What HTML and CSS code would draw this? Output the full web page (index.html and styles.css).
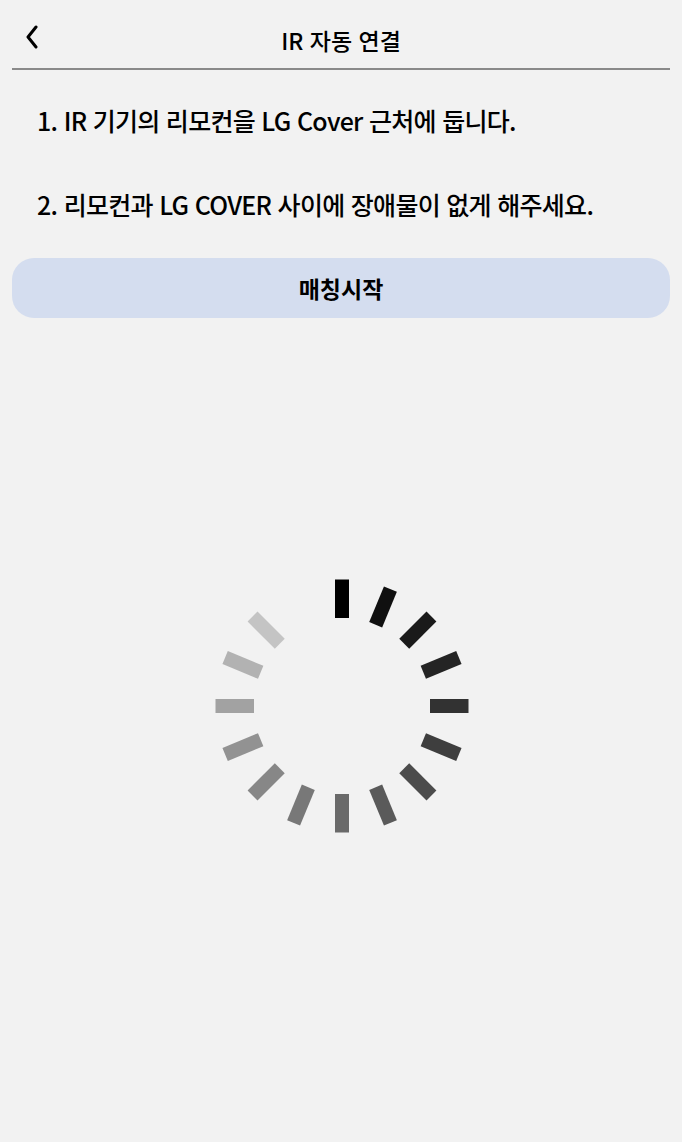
FILE: index.html
```html
<!DOCTYPE html>
<html lang="ko">
<head>
<meta charset="utf-8">
<link rel="stylesheet" href="styles.css">
</head>
<body>
<div class="screen">
  <header class="topbar">
    <svg class="back" width="14" height="24" viewBox="0 0 14 24"><path d="M11 2 L3 12 L11 22" fill="none" stroke="#000" stroke-width="3" stroke-linecap="round" stroke-linejoin="round"/></svg>
    <h1 class="title">IR 자동 연결</h1>
  </header>
  <ol class="steps">
    <li class="step">1. IR 기기의 리모컨을 LG Cover 근처에 둡니다.</li>
    <li class="step">2. 리모컨과 LG COVER 사이에 장애물이 없게 해주세요.</li>
  </ol>
  <button class="start">매칭시작</button>
  <div class="spinner-wrap">
    <svg class="spinner" width="256" height="256" viewBox="-128 -128 256 256">
      <rect x="-7" y="-126.5" width="14" height="38.5" fill="#000000" transform="rotate(0)"/>
      <rect x="-7" y="-126.5" width="14" height="38.5" fill="#101010" transform="rotate(22.5)"/>
      <rect x="-7" y="-126.5" width="14" height="38.5" fill="#1a1a1a" transform="rotate(45)"/>
      <rect x="-7" y="-126.5" width="14" height="38.5" fill="#242424" transform="rotate(67.5)"/>
      <rect x="-7" y="-126.5" width="14" height="38.5" fill="#323232" transform="rotate(90)"/>
      <rect x="-7" y="-126.5" width="14" height="38.5" fill="#3e3e3e" transform="rotate(112.5)"/>
      <rect x="-7" y="-126.5" width="14" height="38.5" fill="#4c4c4c" transform="rotate(135)"/>
      <rect x="-7" y="-126.5" width="14" height="38.5" fill="#5a5a5a" transform="rotate(157.5)"/>
      <rect x="-7" y="-126.5" width="14" height="38.5" fill="#6a6a6a" transform="rotate(180)"/>
      <rect x="-7" y="-126.5" width="14" height="38.5" fill="#787878" transform="rotate(202.5)"/>
      <rect x="-7" y="-126.5" width="14" height="38.5" fill="#878787" transform="rotate(225)"/>
      <rect x="-7" y="-126.5" width="14" height="38.5" fill="#929292" transform="rotate(247.5)"/>
      <rect x="-7" y="-126.5" width="14" height="38.5" fill="#a2a2a2" transform="rotate(270)"/>
      <rect x="-7" y="-126.5" width="14" height="38.5" fill="#b2b2b2" transform="rotate(292.5)"/>
      <rect x="-7" y="-126.5" width="14" height="38.5" fill="#c4c4c4" transform="rotate(315)"/>
    </svg>
  </div>
</div>
</body>
</html>
```

FILE: styles.css
```css
html, body {
  margin: 0;
  padding: 0;
  background: #f2f2f2;
}
body {
  font-family: "Noto Sans CJK KR", "Noto Sans", sans-serif;
  color: #000;
}
.screen {
  width: 682px;
  height: 1142px;
  display: flex;
  flex-direction: column;
}
.topbar {
  position: relative;
  height: 68px;
  margin: 0 12px;
  border-bottom: 2px solid #8a8a8a;
  display: flex;
  align-items: center;
  justify-content: center;
}
.back {
  position: absolute;
  left: 13px;
  top: 25px;
}
.title {
  margin: 0;
  font-size: 23px;
  font-weight: 500;
  line-height: 1;
  padding-top: 12px;
}
.steps {
  list-style: none;
  margin: 0;
  padding: 8px 0 0 37px;
  display: flex;
  flex-direction: column;
}
.step {
  font-size: 25px;
  font-weight: 500;
  line-height: 84px;
  letter-spacing: -0.7px;
}
.start {
  margin: 12px 12px 0;
  height: 60px;
  border: none;
  border-radius: 22px;
  background: #d4ddef;
  font-family: inherit;
  font-size: 23px;
  font-weight: 700;
  color: #000;
}
.spinner-wrap {
  display: flex;
  justify-content: center;
  padding-top: 260px;
}
.spinner {
  margin-left: 1px;
}
```
